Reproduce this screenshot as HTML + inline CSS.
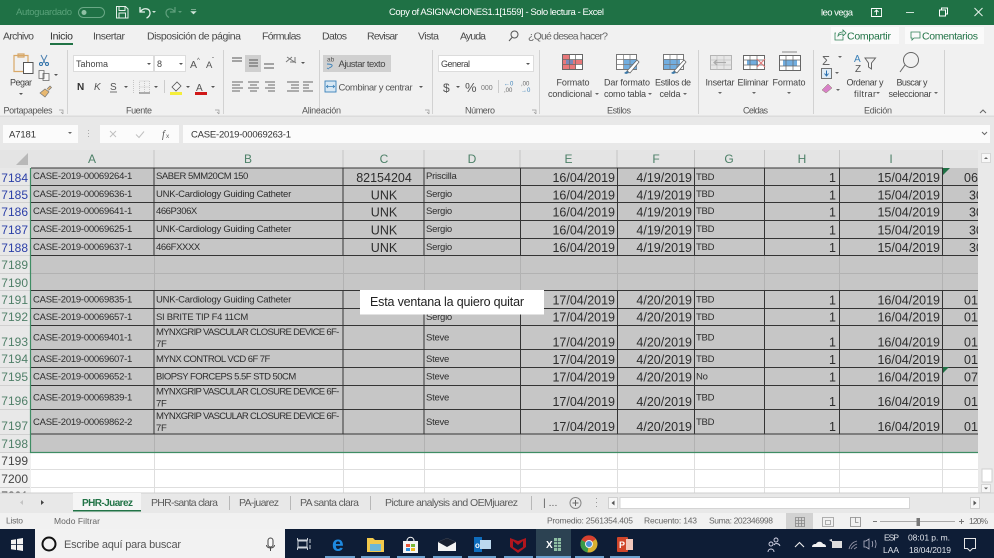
<!DOCTYPE html>
<html lang="es"><head><meta charset="utf-8"><title>Excel</title>
<style>
html,body{margin:0;padding:0;background:#fff;width:994px;height:558px;overflow:hidden}
svg{display:block;font-family:"Liberation Sans",sans-serif;filter:blur(.35px)}
.s{font-size:9.5px;letter-spacing:-.25px;fill:#2d2d2d}
.l{font-size:12.5px;fill:#2d2d2d}
.r{text-anchor:end}
.c{text-anchor:middle}
.n{font-size:12px;text-anchor:end}
.ns{fill:#4f7f68}.nb{fill:#2b3fa8}.nd{fill:#444}
.h{font-size:12px;fill:#4d8068;text-anchor:middle}
.t{font-size:10.5px;fill:#4a4a4a}
.g{font-size:9px;fill:#555;text-anchor:middle}
.m{font-size:9px;fill:#444}
.mc{font-size:9px;fill:#444;text-anchor:middle}
.st{font-size:8.5px;fill:#666}
.tb{font-size:10.5px;fill:#5c5c5c}
.w{fill:#fff}
</style></head><body>
<svg width="994" height="558" viewBox="0 0 994 558" xmlns="http://www.w3.org/2000/svg">
<defs><clipPath id="j"><rect x="943" y="168" width="35" height="300"/></clipPath></defs>
<!-- title bar -->
<rect width="994" height="25" fill="#1f7145"/>
<text x="16" y="15" font-size="9.5" fill="#5aa27a" textLength="56">Autoguardado</text>
<rect x="78.5" y="7.5" width="26" height="10" rx="5" fill="none" stroke="#6aa886"/><circle cx="84" cy="12.5" r="2.5" fill="#8fc0a4"/>
<path d="M116.5 6.500h9l2.500 2.500v9h-11.500zM119 6.500v4h6v-4M119 18v-5h6.500v5" fill="none" stroke="#e4f0e9"/>
<path d="M140 7v5h5M140.500 11.500c3-4 9-3.500 9.500 1 .3 3-2 5-3.500 5.500" fill="none" stroke="#e4f0e9" stroke-width="1.300"/>
<path d="M152 11l2 2 2-2z" fill="#d0e4d8"/>
<path d="M175 7v5h-5M174.500 11.500c-3-4-8-3-8.500 1 0 2 1 4 3 5" fill="none" stroke="#5f9f7c" stroke-width="1.200"/>
<path d="M178 11l2 2 2-2z" fill="#5f9f7c"/>
<path d="M191 9.500h5M191 11.500l2.500 2.500 2.500-2.500z" fill="#d0e4d8" stroke="#d0e4d8" stroke-width=".6"/>
<text x="389" y="15" font-size="9.500" class="w" textLength="215">Copy of ASIGNACIONES1.1[1559] - Solo lectura - Excel</text>
<text x="821" y="15.500" font-size="9.500" class="w" textLength="32">leo vega</text>
<path d="M871.500 8.500h10v8h-10zM876.500 15v-5M874.500 12l2-2 2 2" fill="none" stroke="#fff" stroke-width=".9"/>
<path d="M906 12.500h8" stroke="#cfe3d8"/>
<path d="M939.500 10h6v6h-6zM941.500 10v-2h6v6h-2" fill="none" stroke="#fff"/>
<path d="M974.500 8l8 8M982.500 8l-8 8" stroke="#e6f1ea"/>
<!-- ribbon -->
<rect y="25" width="994" height="92" fill="#f1f1f1"/>
<rect y="115.500" width="994" height="2" fill="#dcdcdc"/>
<g class="t">
<text x="3" y="39.500" textLength="31">Archivo</text>
<text x="50" y="39.500" textLength="23" style="fill:#2f2f2f">Inicio</text>
<text x="93" y="39.500" textLength="32">Insertar</text>
<text x="147" y="39.500" textLength="94">Disposición de página</text>
<text x="262" y="39.500" textLength="39">Fórmulas</text>
<text x="322" y="39.500" textLength="25">Datos</text>
<text x="367" y="39.500" textLength="31">Revisar</text>
<text x="418" y="39.500" textLength="21">Vista</text>
<text x="460" y="39.500" textLength="26">Ayuda</text>
<text x="528" y="39.500" textLength="80" style="fill:#666">¿Qué desea hacer?</text>
</g>
<rect x="50" y="43" width="23" height="2" fill="#217346"/>
<circle cx="514.500" cy="34.500" r="3.500" fill="none" stroke="#555"/><path d="M512 37.500l-3 3.500" stroke="#555"/>
<rect x="831" y="27" width="68" height="17" fill="#fafafa"/>
<path d="M836 33h-1v7h8v-3M838 36c0-3 2-4 5-4v-2l3 3-3 3v-2c-2 0-4 .5-5 2z" fill="none" stroke="#2f8157" stroke-width=".8"/>
<text x="847" y="39.500" font-size="10.500" fill="#217346" textLength="44">Compartir</text>
<rect x="905" y="27" width="79" height="17" fill="#fafafa"/>
<path d="M911 32h9v6h-6l-2 2v-2h-1z" fill="none" stroke="#2f8157" stroke-width=".8"/>
<text x="922" y="39.500" font-size="10.500" fill="#217346" textLength="56">Comentarios</text>
<!-- separators -->
<path d="M67.500 50v64M223.500 50v64M319.500 50v64M432.500 50v64M539.500 50v64M698.500 50v64M813.500 50v64M944.500 50v64" stroke="#d2d2d2"/>
<!-- portapapeles -->
<path d="M14 55.500h14v16h-14zM18 54h6v3h-6z" fill="none" stroke="#d8a868" stroke-width="1.200"/>
<rect x="23.500" y="62.500" width="9.500" height="11" fill="#fff" stroke="#555"/>
<text x="21" y="85.500" class="mc" textLength="22">Pegar</text>
<path d="M19 93l2 2 2-2z" fill="#555"/>
<path d="M41 55l4 8M47 55l-4 8" stroke="#4a7fb0" fill="none"/><circle cx="41" cy="64" r="1.500" fill="none" stroke="#2a6fa8"/><circle cx="47" cy="64" r="1.500" fill="none" stroke="#2a6fa8"/>
<path d="M39 70.500h5v8h-5zM43 73.500h6v7h-6z" fill="#f8f8f8" stroke="#666" stroke-width=".8"/>
<path d="M54 74l2 2 2-2z" fill="#555"/>
<path d="M40 93l5-4 4 3-4 5zM47 89l3-3 1.500 1.500-3 3" fill="#e8b870" stroke="#777" stroke-width=".7"/>
<text x="28" y="113.500" class="g" textLength="49">Portapapeles</text>
<path d="M59 110h4v4M61 112l2 2" fill="none" stroke="#999" stroke-width=".7"/>
<!-- fuente -->
<rect x="73.500" y="55.500" width="80" height="16" fill="#fff" stroke="#dcdcdc"/>
<rect x="154.500" y="55.500" width="31" height="16" fill="#fff" stroke="#dcdcdc"/>
<text x="76" y="67" class="m" textLength="32">Tahoma</text>
<path d="M147 63l2 2 2-2z" fill="#555"/>
<text x="157" y="67" class="m">8</text>
<path d="M179 63l2 2 2-2z" fill="#555"/>
<text x="190" y="68" font-size="10.500" fill="#555">A</text><text x="197" y="62" font-size="6" fill="#555">^</text>
<text x="206" y="68" font-size="9.500" fill="#555">A</text><text x="212" y="62" font-size="6" fill="#555">ˇ</text>
<text x="77" y="90" font-size="10" font-weight="bold" fill="#333">N</text>
<text x="94" y="90" font-size="10" font-style="italic" fill="#555">K</text>
<text x="110" y="90" font-size="10" fill="#555">S</text><path d="M110 92h7" stroke="#555" stroke-width=".8"/>
<path d="M124 86l2 2 2-2z" fill="#555"/>
<path d="M133.500 80v13M139.500 81h10v12h-10zM144.500 81v11M139.500 87h10" fill="none" stroke="#bbb" stroke-width=".8" stroke-dasharray="1 1"/><path d="M139 93h11" stroke="#666"/>
<path d="M154 86l2 2 2-2z" fill="#555"/><path d="M164.500 80v13" stroke="#ccc"/>
<path d="M172 87l5-5 4 4-5 5z" fill="#f4f4f4" stroke="#555" stroke-width=".8"/>
<rect x="170" y="92" width="12" height="3" fill="#f5ee3a"/>
<path d="M186 86l2 2 2-2z" fill="#555"/>
<text x="196" y="91" font-size="10" fill="#555">A</text><rect x="195" y="92" width="12" height="3" fill="#d01818"/>
<path d="M211 86l2 2 2-2z" fill="#555"/>
<text x="139" y="113.500" class="g" textLength="26">Fuente</text>
<path d="M215 110h4v4M217 112l2 2" fill="none" stroke="#999" stroke-width=".7"/>
<!-- alineacion -->
<rect x="245" y="55" width="16" height="17" fill="#cfcfcf"/>
<path d="M232 58h10M232 61h10M249 60h9M249 63h9M249 66h9M264 64h10M264 68h10" stroke="#555"/>
<path d="M287 57l9 6M286 62l6-5M295 57v5h-5" fill="none" stroke="#777"/><path d="M301 62l2 2 2-2z" fill="#555"/>
<path d="M232 82h11M232 85h8M232 88h11M232 91h8M248 82h11M250 85h7M248 88h11M250 91h7M265 82h10M268 85h7M265 88h10M268 91h7M287 82h12M291 85h8M291 88h8M287 91h12M303 82h10M303 85h6M303 88h6M303 91h10" stroke="#666" stroke-width=".9"/>
<rect x="323" y="55" width="68" height="17" fill="#d0d0d0"/>
<text x="327" y="61.500" font-size="6.500" fill="#555">ab</text><path d="M327 64c6 0 7 2 2 4M327 68l2 1" fill="none" stroke="#3a80b8" stroke-width=".9"/>
<text x="338.500" y="67" font-size="9.500" fill="#444" textLength="47">Ajustar texto</text>
<rect x="325" y="81" width="11" height="11" fill="#d8e8f4" stroke="#3a80b8" stroke-width=".9"/><path d="M326 86.500h9M328 85l-1.500 1.500 1.500 1.500M333 85l1.500 1.500-1.500 1.500" fill="none" stroke="#3a80b8" stroke-width=".8"/>
<text x="338.500" y="90.500" font-size="9.500" fill="#555" textLength="74">Combinar y centrar</text>
<path d="M419 86l2 2 2-2z" fill="#555"/>
<text x="321.500" y="113.500" class="g" textLength="39">Alineación</text>
<path d="M425 110h4v4M427 112l2 2" fill="none" stroke="#999" stroke-width=".7"/>
<!-- numero -->
<rect x="438.500" y="55.500" width="95" height="16" fill="#fff" stroke="#dcdcdc"/>
<text x="441" y="67" class="m" textLength="29">General</text>
<path d="M526 63l2 2 2-2z" fill="#555"/>
<text x="443" y="92" font-size="12" fill="#555">$</text><path d="M456 86l2 2 2-2z" fill="#555"/>
<text x="465" y="92" font-size="13" fill="#555">%</text>
<text x="481" y="90" font-size="7" fill="#777">000</text><path d="M498.500 80v13" stroke="#ccc"/>
<text x="504" y="85.500" font-size="6" fill="#3a80b8">←0</text><text x="504" y="92" font-size="6" fill="#666">,00</text>
<text x="521" y="85.500" font-size="6" fill="#666">,00</text><text x="521" y="92" font-size="6" fill="#3a80b8">→0</text>
<text x="480" y="113.500" class="g" textLength="30">Número</text>
<path d="M532 110h4v4M534 112l2 2" fill="none" stroke="#999" stroke-width=".7"/>
<!-- estilos -->
<rect x="562.500" y="54.500" width="20" height="15" fill="#fff" stroke="#666"/>
<path d="M563 55h7v5h12v4h-6v5h-13z" fill="#e8787a"/><rect x="566" y="60" width="7" height="4" fill="#7a88b8"/>
<path d="M562.500 59.500h20M562.500 64.500h20M569.500 54.500v15M575.500 54.500v15" stroke="#666" stroke-width=".7" fill="none"/>
<rect x="616.500" y="54.500" width="20" height="15" fill="#fff" stroke="#777"/><rect x="624" y="59" width="12.500" height="10" fill="#72aee0"/>
<path d="M616.500 59.500h20M616.500 64.500h20M623.500 54.500v15M630 54.500v15" stroke="#777" stroke-width=".7" fill="none"/>
<path d="M627 71l10-11 2 2-9 11z" fill="#fff" stroke="#666" stroke-width=".8"/><path d="M624 73l3-2 2 2-3 1z" fill="#3a78a8"/>
<rect x="663.500" y="54.500" width="20" height="15" fill="#fff" stroke="#777"/><rect x="664" y="59" width="16" height="10" fill="#72aee0"/>
<path d="M663.500 59.500h20M663.500 64.500h20M670 54.500v15M677 54.500v15" stroke="#777" stroke-width=".7" fill="none"/>
<path d="M674 71l10-11 2 2-9 11z" fill="#fff" stroke="#666" stroke-width=".8"/><path d="M671 73l3-2 2 2-3 1z" fill="#3a78a8"/>
<text x="573" y="85.500" class="mc" textLength="33">Formato</text>
<text x="570" y="97" class="mc" textLength="44">condicional</text>
<text x="627" y="85.500" class="mc" textLength="46">Dar formato</text>
<text x="625" y="97" class="mc" textLength="42">como tabla</text>
<text x="673" y="85.500" class="mc" textLength="36">Estilos de</text>
<text x="670" y="97" class="mc" textLength="21">celda</text>
<path d="M595 93l2 2 2-2zM648 93l2 2 2-2zM683 93l2 2 2-2z" fill="#666"/>
<text x="619" y="113.500" class="g" textLength="24">Estilos</text>
<!-- celdas -->
<rect x="710.500" y="55.500" width="21" height="14" fill="#e6e6e6" stroke="#b4b4b4"/><path d="M710.500 60h21M710.500 65h21M717 55.500v14M724 55.500v14" stroke="#c0c0c0" stroke-width=".7"/>
<path d="M714 62.500h12M717 60l-3 2.500 3 2.500" fill="none" stroke="#aaa" stroke-width="1.200"/>
<rect x="743.500" y="55.500" width="21" height="14" fill="#fff" stroke="#666"/><rect x="747" y="60" width="11" height="5" fill="#72aee0"/><path d="M743.500 60h21M743.500 65h21M750 55.500v14M757 55.500v14" stroke="#666" stroke-width=".7"/>
<path d="M757 59l8 8M765 59l-8 8" stroke="#e07a7a" stroke-width="1.100"/>
<rect x="779.500" y="55.500" width="21" height="15" fill="#fff" stroke="#666"/><rect x="783" y="60" width="14" height="6" fill="#72aee0"/><path d="M779.500 60h21M779.500 66h21M786 55.500v15M793 55.500v15M782 52h15" stroke="#666" stroke-width=".7"/>
<text x="720" y="85.500" class="mc" textLength="29">Insertar</text>
<text x="753" y="85.500" class="mc" textLength="31">Eliminar</text>
<text x="789" y="85.500" class="mc" textLength="33">Formato</text>
<path d="M718 92l2 2 2-2zM752 92l2 2 2-2zM787 92l2 2 2-2z" fill="#666"/>
<text x="755.500" y="113.500" class="g" textLength="25">Celdas</text>
<!-- edicion -->
<text x="822" y="65" font-size="13" fill="#666">Σ</text><path d="M838 56l2 2 2-2z" fill="#666"/>
<rect x="821.500" y="68.500" width="10" height="10" fill="#e0ecf6" stroke="#666" stroke-width=".9"/><path d="M826.500 70.500v5M824.500 73.500l2 2.500 2-2.500" fill="none" stroke="#2a70b0"/>
<path d="M835 72l2 2 2-2z" fill="#666"/>
<path d="M822 90l6-6 4 4-6 5z" fill="#d880c8" stroke="#888866" stroke-width=".5"/>
<path d="M836 89l2 2 2-2z" fill="#666"/>
<text x="854" y="62" font-size="10" fill="#3a80b8">A</text><text x="855" y="72" font-size="10" fill="#555">Z</text>
<path d="M865 58h10.500l-4 5v6l-3-2v-4z" fill="none" stroke="#666"/>
<circle cx="911" cy="60" r="7.500" fill="none" stroke="#666"/><path d="M905 65l-5 7" stroke="#666"/>
<text x="865" y="85.500" class="mc" textLength="37">Ordenar y</text>
<text x="865" y="97" class="mc" textLength="22">filtrar</text>
<text x="912" y="85.500" class="mc" textLength="31">Buscar y</text>
<text x="910" y="97" class="mc" textLength="43">seleccionar</text>
<path d="M876 92l2 2 2-2zM934 92l2 2 2-2z" fill="#666"/>
<text x="878" y="113.500" class="g" textLength="28">Edición</text>
<path d="M980 113l3-3 3 3" fill="none" stroke="#666"/>
<!-- formula bar -->
<rect y="117" width="994" height="33" fill="#e8e8e8"/>
<rect x="3" y="125" width="75" height="18" fill="#fbfbfb"/>
<text x="9" y="137.500" font-size="9.500" fill="#333" textLength="27">A7181</text>
<path d="M68 132l2 2 2-2z" fill="#666"/>
<path d="M88.500 130v1M88.500 133v1M88.500 136v1" stroke="#aaa"/>
<rect x="100" y="125" width="79" height="18" fill="#fbfbfb"/>
<path d="M110 131l6 6M116 131l-6 6" stroke="#c0c0c0"/>
<path d="M136 134.500l3 3 5-6" fill="none" stroke="#c0c0c0"/>
<text x="162" y="137.500" font-size="10" font-style="italic" font-family="Liberation Serif" fill="#555">f</text><text x="166" y="138" font-size="6.500" fill="#666">x</text>
<rect x="183" y="125" width="807" height="18" fill="#fbfbfb"/>
<text x="191" y="137.500" font-size="9.500" fill="#333" textLength="100">CASE-2019-00069263-1</text>
<path d="M982 132l2.500 2.500 2.500-2.500" fill="none" stroke="#666"/>
<!-- column header -->
<rect y="150" width="978" height="18" fill="#e4e4e4"/>
<path d="M28 153v12h-12z" fill="#b8b8b8"/>
<path d="M154 150v18M343 150v18M424 150v18M520 150v18M617 150v18M694.500 150v18M764.500 150v18M839.500 150v18M942.500 150v18" stroke="#c4c4c4"/>
<g>
<text x="92" y="163" class="h">A</text><text x="248" y="163" class="h">B</text><text x="384" y="163" class="h">C</text><text x="472" y="163" class="h">D</text><text x="568.500" y="163" class="h">E</text><text x="656" y="163" class="h">F</text><text x="729" y="163" class="h">G</text><text x="802" y="163" class="h">H</text><text x="891" y="163" class="h">I</text>
</g>
<!-- row header -->
<rect y="168" width="31" height="325" fill="#e8e8e8"/>
<rect y="452" width="31" height="41" fill="#f0f0f0"/>
<g stroke="#d0d0d0"><path d="M0 185.500h30M0 202.500h30M0 220.500h30M0 238.500h30M0 255.500h30M0 273.500h30M0 290.500h30M0 308.500h30M0 325.500h30M0 349.500h30M0 367.500h30M0 385.500h30M0 409.500h30M0 434.500h30M0 452.500h30M0 469.500h30M0 487.500h30"/></g>
<!-- sheet -->
<rect x="31" y="168" width="947" height="284" fill="#c6c6c6"/>
<rect x="31" y="452" width="947" height="41" fill="#fff"/>
<!-- light grid -->
<path d="M31 273.500h947M154.500 255v35M343.500 255v35M424.500 255v35M520.500 255v35M617.500 255v35M694.500 255v35M764.500 255v35M839.500 255v35M942.500 255v35M154.500 434v18M343.500 434v18M424.500 434v18M520.500 434v18M617.500 434v18M694.500 434v18M764.500 434v18M839.500 434v18M942.500 434v18" stroke="#b2b2b2"/>
<path d="M31 469.500h947M31 487.500h947M154.500 453v40M343.500 453v40M424.500 453v40M520.500 453v40M617.500 453v40M694.500 453v40M764.500 453v40M839.500 453v40M942.500 453v40" stroke="#dedede"/>
<!-- dark borders -->
<path d="M31 168h912M31 185.500h947M31 202.500h947M31 220.500h947M31 238.500h947M31 255.500h947M31 290.500h947M31 308.500h947M31 325.500h947M31 349.500h947M31 367.500h947M31 385.500h947M31 409.500h947M31 434h947M154 168v87.500M343 168v87.500M424 168v87.500M520.500 168v87.500M617.500 168v87.500M694.500 168v87.500M764.500 168v87.500M839.500 168v87.500M942.500 168v87.500M154 290v144M343 290v144M424 290v144M520.500 290v144M617.500 290v144M694.500 290v144M764.500 290v144M839.500 290v144M942.500 290v144" stroke="#343434" stroke-width="1" fill="none"/>
<!-- selection outline -->
<path d="M30.500 168v284.500H978" fill="none" stroke="#3f8d64" stroke-width="1.200"/>
<path d="M943 168h7l-7 7zM943 367h6l-6 6z" fill="#1f7145"/>
<!-- row numbers -->
<g>
<text x="28" y="182" class="n nb">7184</text><text x="28" y="199" class="n nb">7185</text><text x="28" y="216" class="n nb">7186</text><text x="28" y="234" class="n nb">7187</text><text x="28" y="252" class="n nb">7188</text>
<text x="28" y="269" class="n ns">7189</text><text x="28" y="287" class="n ns">7190</text><text x="28" y="304" class="n ns">7191</text><text x="28" y="321" class="n ns">7192</text><text x="28" y="346" class="n ns">7193</text><text x="28" y="363" class="n ns">7194</text><text x="28" y="381" class="n ns">7195</text><text x="28" y="405" class="n ns">7196</text><text x="28" y="430" class="n ns">7197</text><text x="28" y="448" class="n ns">7198</text>
<text x="28" y="465" class="n nd">7199</text><text x="28" y="483" class="n nd">7200</text><text x="28" y="500" class="n nd">7201</text>
</g>
<!-- column A -->
<g class="s">
<text x="33" y="179">CASE-2019-00069264-1</text>
<text x="33" y="197">CASE-2019-00069636-1</text>
<text x="33" y="214">CASE-2019-00069641-1</text>
<text x="33" y="232">CASE-2019-00069625-1</text>
<text x="33" y="250">CASE-2019-00069637-1</text>
<text x="33" y="302.500">CASE-2019-00069835-1</text>
<text x="33" y="320">CASE-2019-00069657-1</text>
<text x="33" y="340.500">CASE-2019-00069401-1</text>
<text x="33" y="362">CASE-2019-00069607-1</text>
<text x="33" y="379.500">CASE-2019-00069652-1</text>
<text x="33" y="400.500">CASE-2019-00069839-1</text>
<text x="33" y="425">CASE-2019-00069862-2</text>
</g>
<!-- column B -->
<g class="s">
<text x="156" y="179" textLength="92">SABER 5MM20CM 150</text>
<text x="156" y="197" textLength="135">UNK-Cardiology Guiding Catheter</text>
<text x="156" y="214" textLength="41">466P306X</text>
<text x="156" y="232" textLength="135">UNK-Cardiology Guiding Catheter</text>
<text x="156" y="250" textLength="44">466FXXXX</text>
<text x="156" y="302.500" textLength="135">UNK-Cardiology Guiding Catheter</text>
<text x="156" y="320" textLength="92">SI BRITE TIP F4 11CM</text>
<text x="156" y="335" textLength="183">MYNXGRIP VASCULAR CLOSURE DEVICE 6F-</text><text x="156" y="347">7F</text>
<text x="156" y="362" textLength="114">MYNX CONTROL VCD 6F 7F</text>
<text x="156" y="379.500" textLength="140">BIOPSY FORCEPS 5.5F STD 50CM</text>
<text x="156" y="394.500" textLength="183">MYNXGRIP VASCULAR CLOSURE DEVICE 6F-</text><text x="156" y="406.500">7F</text>
<text x="156" y="419" textLength="183">MYNXGRIP VASCULAR CLOSURE DEVICE 6F-</text><text x="156" y="431">7F</text>
</g>
<!-- column C -->
<g class="l c">
<text x="384" y="182">82154204</text><text x="384" y="199.500">UNK</text><text x="384" y="216.500">UNK</text><text x="384" y="234.500">UNK</text><text x="384" y="252">UNK</text>
</g>
<!-- column D -->
<g class="s">
<text x="426" y="179">Priscilla</text><text x="426" y="197">Sergio</text><text x="426" y="214">Sergio</text><text x="426" y="232">Sergio</text><text x="426" y="250">Sergio</text>
<text x="426" y="320">Sergio</text><text x="426" y="340.500">Steve</text><text x="426" y="362">Steve</text><text x="426" y="379.500">Steve</text><text x="426" y="400.500">Steve</text><text x="426" y="425">Steve</text>
</g>
<!-- column E -->
<g class="l r">
<text x="615" y="182">16/04/2019</text><text x="615" y="199.500">16/04/2019</text><text x="615" y="216.500">16/04/2019</text><text x="615" y="234.500">16/04/2019</text><text x="615" y="252">16/04/2019</text>
<text x="615" y="304.500">17/04/2019</text><text x="615" y="321.500">17/04/2019</text><text x="615" y="346.500">17/04/2019</text><text x="615" y="364">17/04/2019</text><text x="615" y="381.500">17/04/2019</text><text x="615" y="406">17/04/2019</text><text x="615" y="431">17/04/2019</text>
</g>
<!-- column F -->
<g class="l r">
<text x="692" y="182">4/19/2019</text><text x="692" y="199.500">4/19/2019</text><text x="692" y="216.500">4/19/2019</text><text x="692" y="234.500">4/19/2019</text><text x="692" y="252">4/19/2019</text>
<text x="692" y="304.500">4/20/2019</text><text x="692" y="321.500">4/20/2019</text><text x="692" y="346.500">4/20/2019</text><text x="692" y="364">4/20/2019</text><text x="692" y="381.500">4/20/2019</text><text x="692" y="406">4/20/2019</text><text x="692" y="431">4/20/2019</text>
</g>
<!-- column G -->
<g class="s">
<text x="696" y="180">TBD</text><text x="696" y="197">TBD</text><text x="696" y="214">TBD</text><text x="696" y="232">TBD</text><text x="696" y="250">TBD</text>
<text x="696" y="302.500">TBD</text><text x="696" y="320">TBD</text><text x="696" y="340.500">TBD</text><text x="696" y="362">TBD</text><text x="696" y="379.500">No</text><text x="696" y="400.500">TBD</text><text x="696" y="425">TBD</text>
</g>
<!-- column H -->
<g class="l r">
<text x="836" y="182">1</text><text x="836" y="199.500">1</text><text x="836" y="216.500">1</text><text x="836" y="234.500">1</text><text x="836" y="252">1</text>
<text x="836" y="304.500">1</text><text x="836" y="321.500">1</text><text x="836" y="346.500">1</text><text x="836" y="364">1</text><text x="836" y="381.500">1</text><text x="836" y="406">1</text><text x="836" y="431">1</text>
</g>
<!-- column I -->
<g class="l r">
<text x="940" y="182">15/04/2019</text><text x="940" y="199.500">15/04/2019</text><text x="940" y="216.500">15/04/2019</text><text x="940" y="234.500">15/04/2019</text><text x="940" y="252">15/04/2019</text>
<text x="940" y="304.500">16/04/2019</text><text x="940" y="321.500">16/04/2019</text><text x="940" y="346.500">16/04/2019</text><text x="940" y="364">16/04/2019</text><text x="940" y="381.500">16/04/2019</text><text x="940" y="406">16/04/2019</text><text x="940" y="431">16/04/2019</text>
</g>
<!-- column J -->
<g class="l" clip-path="url(#j)">
<text x="964" y="182">06</text><text x="969" y="199.500">30</text><text x="969" y="216.500">30</text><text x="969" y="234.500">30</text><text x="969" y="252">30</text>
<text x="964" y="304.500">01</text><text x="964" y="321.500">01</text><text x="964" y="346.500">01</text><text x="964" y="364">01</text><text x="964" y="381.500">07</text><text x="964" y="406">01</text><text x="964" y="431">01</text>
</g>
<!-- popup -->
<rect x="360" y="290" width="184" height="24.500" fill="#fff"/>
<text x="370" y="306" font-size="12.500" fill="#222" textLength="154">Esta ventana la quiero quitar</text>
<!-- v scrollbar -->
<rect x="978" y="150" width="16" height="343" fill="#e9e9e9"/>
<rect x="981.500" y="153.500" width="9" height="9" fill="#f7f7f7" stroke="#d6d6d6"/><path d="M984 159l2-2 2 2z" fill="#666"/>
<rect x="982" y="469" width="10" height="13" fill="#fff" stroke="#cfcfcf"/>
<rect x="981.500" y="484.500" width="9" height="8" fill="#f7f7f7" stroke="#d6d6d6"/><path d="M984 487.500l2 2 2-2z" fill="#666"/>
<!-- tabs -->
<rect y="493" width="994" height="20" fill="#e8e8e8"/>
<path d="M0 493h994" stroke="#cfcfcf"/>
<path d="M23 500l-3 2.500 3 2.500z" fill="#c4c4c4"/><path d="M41 500l3 2.500-3 2.500z" fill="#444"/>
<rect x="73" y="493" width="68" height="18" fill="#f5f5f5"/><rect x="73" y="510" width="68" height="1.500" fill="#217346"/>
<text x="82" y="506" font-size="10" font-weight="bold" fill="#217346" textLength="51">PHR-Juarez</text>
<text x="151" y="506" class="tb" textLength="67">PHR-santa clara</text>
<text x="239" y="506" class="tb" textLength="40">PA-juarez</text>
<text x="300" y="506" class="tb" textLength="59">PA santa clara</text>
<text x="385" y="506" class="tb" textLength="133">Picture analysis and OEMjuarez</text>
<path d="M229.500 496v14M290.500 496v14M370.500 496v14M531.500 496v14" stroke="#b8b8b8"/>
<text x="543" y="506" class="tb">| ...</text>
<circle cx="575.500" cy="503" r="5.500" fill="none" stroke="#888"/><path d="M572.500 503h6M575.500 500v6" stroke="#666"/>
<path d="M596.500 498v1M596.500 502v1M596.500 506v1" stroke="#999"/>
<rect x="608.500" y="497.500" width="9" height="11" fill="#f7f7f7" stroke="#d0d0d0"/><path d="M614.500 500.500l-3 2.500 3 2.500z" fill="#555"/>
<rect x="620" y="497.500" width="289.500" height="11" fill="#fff" stroke="#d4d4d4"/>
<rect x="970.500" y="497.500" width="9" height="11" fill="#f7f7f7" stroke="#d0d0d0"/><path d="M973.500 500.500l3 2.500-3 2.500z" fill="#555"/>
<!-- status bar -->
<rect y="513" width="994" height="16" fill="#f1f1f1"/>
<text x="6" y="523.500" class="st" textLength="17">Listo</text>
<text x="54" y="524" class="st" textLength="46">Modo Filtrar</text>
<text x="547" y="523.500" class="st" textLength="86">Promedio: 2561354.405</text>
<text x="644" y="523.500" class="st" textLength="53">Recuento: 143</text>
<text x="709" y="523.500" class="st" textLength="64">Suma: 202346998</text>
<rect x="786" y="513" width="27" height="16" fill="#d2d2d2"/>
<path d="M795.500 517.500h9v9h-9zM798.500 517.500v9M801.500 517.500v9M795.500 520.500h9M795.500 523.500h9" fill="none" stroke="#888" stroke-width=".8"/>
<path d="M822.500 517.500h11v9h-11zM825.500 520.500h5v4h-5z" fill="none" stroke="#999" stroke-width=".8"/>
<path d="M850.500 517.500h10v9h-10zM855.500 517.500v5h3" fill="none" stroke="#888" stroke-width=".8"/>
<path d="M880 521.500h75" stroke="#aaa"/><path d="M873 521.500h4M959 521.500h5M961.500 519v5" stroke="#777"/>
<rect x="916.500" y="518" width="3.500" height="8" fill="#777"/>
<text x="969" y="524" class="st" textLength="19">120%</text>
<!-- taskbar -->
<rect y="529" width="994" height="29" fill="#0e1d36"/>
<path d="M11 540l5-.8v5h-5zM17 539l6-1v6.200h-6zM11 545h5v5l-5-.8zM17 545h6v6l-6-1z" fill="#f2f2f2"/>
<rect x="35" y="529" width="250" height="29" fill="#f2f2f2"/>
<circle cx="49" cy="544" r="6.500" fill="none" stroke="#111" stroke-width="2"/>
<text x="64" y="548" font-size="11" fill="#555" textLength="117">Escribe aquí para buscar</text>
<rect x="268" y="538" width="5" height="9" rx="2.500" fill="#f8f8f8" stroke="#444"/><path d="M266.500 545c0 4 8 4 8 0M270.500 548v3" fill="none" stroke="#444"/>
<path d="M297.500 538v2h10v-2M297.500 550v-2h10v2M298 541h9v6h-9zM310 539v4M310 545v4" fill="none" stroke="#ccd2da" stroke-width="1"/>
<text x="332" y="551" font-size="21" font-weight="bold" fill="#1e8ae0">e</text>
<path d="M367 538h6l2 2h9v12h-17z" fill="#f2c94c"/><rect x="370" y="544" width="11" height="7" fill="#6db7d8"/>
<rect x="403" y="541" width="15" height="12" fill="#f4f4f4"/><path d="M407 541c0-5 7-5 7 0" fill="none" stroke="#f4f4f4"/>
<rect x="406" y="544" width="4" height="3" fill="#e8563a"/><rect x="411" y="544" width="4" height="3" fill="#7ab838"/><rect x="406" y="548" width="4" height="3" fill="#2a90e0"/><rect x="411" y="548" width="4" height="3" fill="#f0b820"/>
<path d="M438 542l9-4 9 4v9h-18z" fill="#f4f4f4"/><path d="M438 542l9 5 9-5-9-4z" fill="#182030"/>
<rect x="474" y="537" width="8" height="15" fill="#0e6cbc"/><rect x="480" y="540" width="11" height="9" fill="#bcd8ee"/><text x="475" y="548" font-size="8" font-weight="bold" fill="#fff">o</text>
<path d="M510 538l8 3 8-3v9l-8 6-8-6z" fill="#b0161e"/><path d="M513 541v6l5 3 5-3v-6l-5 4z" fill="#0e1d36"/>
<rect x="536" y="529" width="35" height="29" fill="#2c4252"/>
<text x="546" y="548" font-size="10" font-weight="bold" fill="#fff">X</text><rect x="554" y="538" width="7" height="13" fill="#8fc0a4"/><path d="M554 541.500h7M554 544.500h7M554 547.500h7M557.500 538v13" stroke="#2c4252" stroke-width=".7"/>
<circle cx="589" cy="544" r="8.500" fill="#d8b030"/><path d="M589 544L581.500 540a8.500 8.500 0 0 1 14.500-1z" fill="#d84030"/><path d="M589 544l-7.500-4a8.500 8.500 0 0 0 6 12.400z" fill="#3a9a48"/><circle cx="589" cy="544" r="3.500" fill="#4a90d8" stroke="#eee"/>
<rect x="617" y="537" width="11" height="15" fill="#d0452a" rx="1"/><rect x="626" y="539" width="7" height="11" fill="#f2c8bc"/><text x="619" y="548" font-size="9" font-weight="bold" fill="#fff">P</text>
<path d="M325 557h30M361 557h29M397 557h28M433 557h29M468 557h28M504 557h29M536 557h35M575 557h29M610 557h30" stroke="#6ea2cf" stroke-width="2"/>
<!-- tray -->
<circle cx="776" cy="540" r="2" fill="none" stroke="#ddddee" stroke-width=".9"/><circle cx="771" cy="544" r="2" fill="none" stroke="#ddddee" stroke-width=".9"/><path d="M768 552c0-4 6-4 6 0M774 545c1-2 5-2 6 1" fill="none" stroke="#ddddee" stroke-width=".9"/>
<path d="M795 547l4.500-4.500 4.500 4.500" fill="none" stroke="#eee" stroke-width="1.100"/>
<path d="M812 547c0-3 3-3 4-3 1-3 6-3 7 0 2 0 3 1 3 3z" fill="#f2f2f2"/>
<rect x="832" y="541" width="10" height="7" fill="#ddd"/><path d="M829 540l3 2v-3" fill="#ddd"/>
<path d="M849 549c1-4 4-7 8-8M851 549c1-2 3-4 6-5M854 549l3-2" fill="none" stroke="#9999aa" stroke-width=".9"/>
<path d="M864 541h2l3-2v10l-3-2h-2zM872 541c1 2 1 4 0 6M875 540c1.500 3 1.500 5 0 8" fill="none" stroke="#bbbbcc" stroke-width=".8"/>
<text x="884" y="540.500" font-size="8.500" fill="#dfe3ea" textLength="15">ESP</text>
<text x="883" y="553" font-size="8.500" fill="#dfe3ea" textLength="16">LAA</text>
<text x="908" y="540.500" font-size="8.500" fill="#dfe3ea" textLength="42">08:01 p. m.</text>
<text x="909" y="553" font-size="8.500" fill="#dfe3ea" textLength="42">18/04/2019</text>
<path d="M964.500 538.500h11v10h-3l-2.500 2.500-2.500-2.500h-3z" fill="none" stroke="#e6e6e6"/>
</svg>
</body></html>
